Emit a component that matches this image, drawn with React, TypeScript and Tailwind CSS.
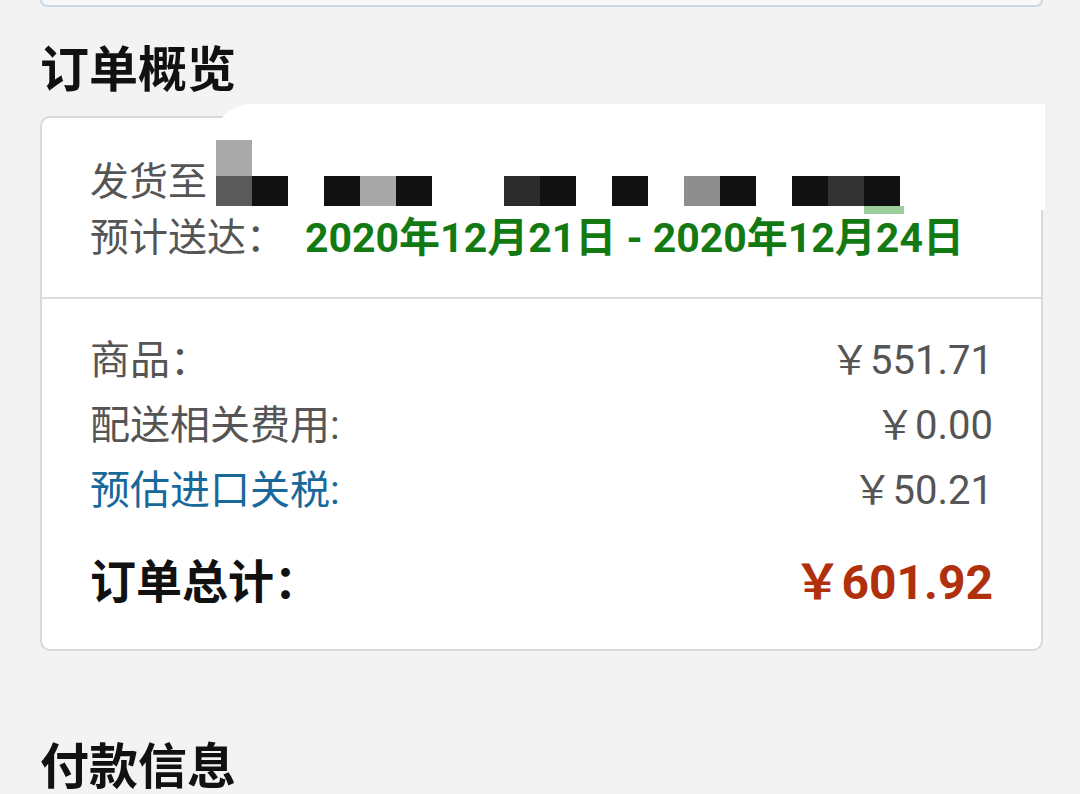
import React from "react";

const font = { fontFamily: '"Roboto", "Noto Sans CJK SC", sans-serif' };

type Row = { label: string; value: string; link?: boolean };

const rows: Row[] = [
  { label: "商品：", value: "￥551.71" },
  { label: "配送相关费用:", value: "￥0.00" },
  { label: "预估进口关税:", value: "￥50.21", link: true },
];

// redaction blocks over the address line
const blocks: { x: number; c: string }[] = [
  { x: 216, c: "bg-[#5a5a5a]" },
  { x: 252, c: "bg-[#111111]" },
  { x: 324, c: "bg-[#111111]" },
  { x: 360, c: "bg-[#a8a8a8]" },
  { x: 396, c: "bg-[#111111]" },
  { x: 504, c: "bg-[#2b2b2b]" },
  { x: 540, c: "bg-[#111111]" },
  { x: 612, c: "bg-[#111111]" },
  { x: 684, c: "bg-[#8e8e8e]" },
  { x: 720, c: "bg-[#111111]" },
  { x: 792, c: "bg-[#111111]" },
  { x: 828, c: "bg-[#333333]" },
  { x: 864, c: "bg-[#111111]" },
];

export default function App() {
  return (
    <div className="relative h-[794px] w-[1080px] overflow-hidden bg-[#f3f3f3]" style={font}>
      {/* previous card edge */}
      <div className="ml-[40px] h-[7px] w-[1003px] rounded-b-[10px] border-x-2 border-b-2 border-[#c9d8e3] bg-[#f6f8fa]" />

      <h2 className="ml-[40px] mt-[36px] text-[49px] font-bold leading-[56px] text-[#111]">订单概览</h2>

      <div className="ml-[40px] mt-[17px] w-[1003px] rounded-[10px] border-2 border-[#d9d9d9] bg-white">
        <div className="pl-[48px] pr-[50px] pt-[36px] pb-[31px] text-[39px] leading-[56px] text-[#555]">
          <div>发货至</div>
          <div className="flex items-center">
            <span>预计送达：</span>
            <span className="ml-[20px] text-[41px] font-bold text-[#137a13]">
              2020年12月21日 - 2020年12月24日
            </span>
          </div>
        </div>

        <div className="h-[2px] bg-[#dcdcdc]" />

        <div className="pl-[48px] pr-[48px] pt-[29px] pb-[34px]">
          {rows.map((r) => (
            <div key={r.label} className="flex items-center justify-between text-[40px] leading-[65px]">
              <span className={r.link ? "text-[#19689a]" : "text-[#555]"}>{r.label}</span>
              <span className="text-[#555]">{r.value}</span>
            </div>
          ))}
          <div className="mt-[27px] flex items-center justify-between leading-[65px]">
            <span className="text-[46px] font-bold text-[#111]">订单总计：</span>
            <span className="text-[48px] font-bold text-[#b0300c]">￥601.92</span>
          </div>
        </div>
      </div>

      <h2 className="ml-[40px] mt-[89px] text-[49px] font-bold leading-[56px] text-[#111]">付款信息</h2>

      {/* address redaction */}
      <div className="absolute left-[212px] top-[104px] h-[106px] w-[833px] rounded-tl-[40px] bg-white" />
      <div className="absolute left-[216px] top-[140px] h-[36px] w-[36px] bg-[#aaaaaa]" />
      {blocks.map((b) => (
        <div
          key={b.x}
          className={`absolute top-[176px] h-[30px] w-[36px] ${b.c}`}
          style={{ left: b.x }}
        />
      ))}
      <div className="absolute left-[864px] top-[206px] h-[8px] w-[40px] bg-[#9ccf9c]" />
    </div>
  );
}
